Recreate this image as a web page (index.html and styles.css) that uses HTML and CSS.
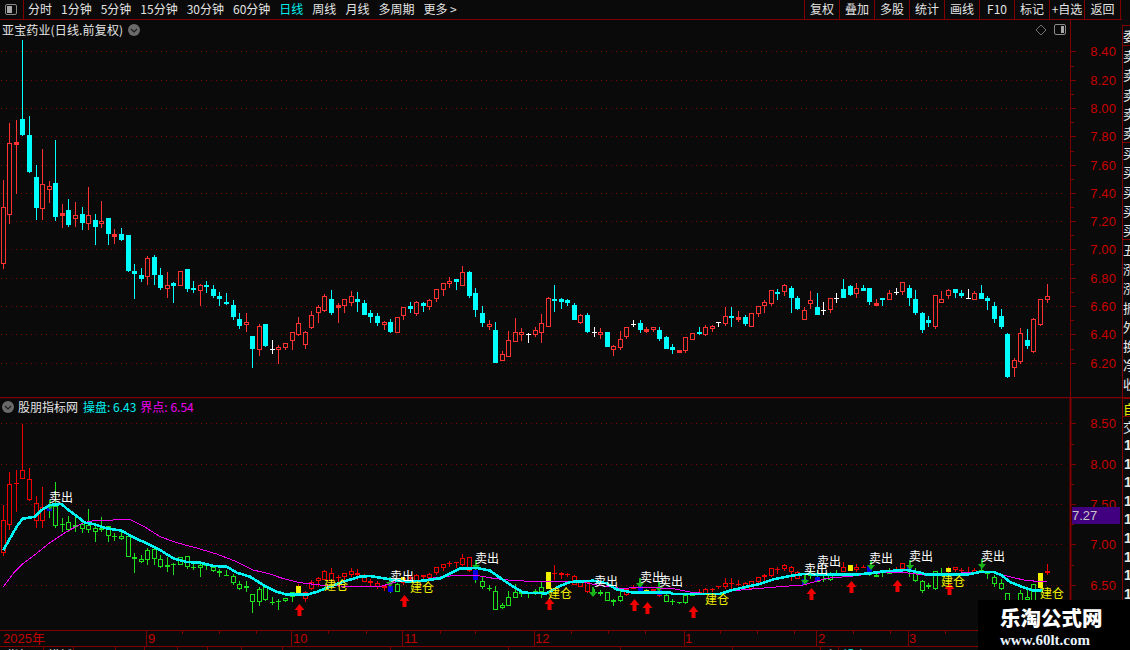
FILE: index.html
```html
<!DOCTYPE html>
<html lang="zh-CN">
<head>
<meta charset="utf-8">
<title>亚宝药业</title>
<link rel="stylesheet" href="styles.css">
</head>
<body>
<div class="app">
  <header class="toolbar">
    <div class="layout-btn">
      <svg width="12" height="12" viewBox="0 0 12 12"><rect x="0.5" y="0.5" width="11" height="10" rx="1.5" fill="none" stroke="#8a8a8a"/><rect x="2" y="2" width="5" height="7" fill="#a8a8a8"/></svg>
    </div>
    <nav class="tabs">
      <span>分时</span><span>1分钟</span><span>5分钟</span><span>15分钟</span><span>30分钟</span><span>60分钟</span>
      <span class="active">日线</span><span>周线</span><span>月线</span><span>多周期</span><span>更多 &gt;</span>
    </nav>
    <nav class="actions">
      <span>复权</span><span>叠加</span><span>多股</span><span>统计</span><span>画线</span><span>F10</span><span>标记</span><span>+自选</span><span>返回</span>
    </nav>
  </header>
  <main class="main">
    <div class="charts">
      <section class="pane pane-upper">
        <div class="pane-title">
          <span class="stock-name">亚宝药业(日线.前复权)</span>
          <svg class="chev" width="12" height="12" viewBox="0 0 12 12"><circle cx="6" cy="6" r="6" fill="#6a6a6a"/><path d="M3 5l3 3 3-3" fill="none" stroke="#1c1c1c" stroke-width="1.2"/></svg>
        </div>
        <div class="pane-tools">
          <svg width="12" height="12" viewBox="0 0 12 12"><path d="M6 1l5 5-5 5-5-5z" fill="none" stroke="#707070"/></svg>
          <svg width="13" height="12" viewBox="0 0 13 12"><rect x="0.5" y="0.5" width="11" height="10" rx="1.5" fill="none" stroke="#8a8a8a"/><rect x="7" y="2" width="3" height="7" fill="#a8a8a8"/></svg>
        </div>
        <svg id="upper" class="plot" width="1122" height="377" viewBox="0 20 1122 377"></svg>
      </section>
      <section class="pane pane-lower">
        <div class="pane-title lower-title">
          <svg class="chev" width="12" height="12" viewBox="0 0 12 12"><circle cx="6" cy="6" r="6" fill="#6a6a6a"/><path d="M3 5l3 3 3-3" fill="none" stroke="#1c1c1c" stroke-width="1.2"/></svg>
          <span>股朋指标网</span>
          <span class="cyan">操盘: 6.43</span>
          <span class="magenta">界点: 6.54</span>
        </div>
        <svg id="lower" class="plot" width="1122" height="233" viewBox="0 397 1122 233"></svg>
      </section>
      <svg id="time" class="time" width="1122" height="20" viewBox="0 630 1122 20"></svg>
    </div>
    <aside class="side">
      <div class="side-head"></div>
      <div class="side-group one"><span>委</span></div>
      <div class="side-group five"><span>卖</span><span>卖</span><span>卖</span><span>卖</span><span>卖</span></div>
      <div class="side-group five"><span>买</span><span>买</span><span>买</span><span>买</span><span>买</span></div>
      <div class="side-group eight"><span>五</span><span>涨</span><span>涨</span><span>振</span><span>外</span><span>换</span><span>净</span><span>收</span></div>
      <div class="side-group self"><span>自</span></div>
      <div class="side-group trade"><span>交</span></div>
      <div class="side-group nums"><span>1</span><span>1</span><span>1</span><span>1</span><span>1</span><span>1</span><span>1</span><span>1</span><span>1</span></div>
    </aside>
  </main>
  <div class="watermark">
    <strong>乐淘公式网</strong>
    <em>www.60lt.com</em>
  </div>
</div>
<script src="script.js"></script>
</body>
</html>
```
FILE: styles.css
```css
* { box-sizing: border-box; }
html, body { margin: 0; padding: 0; background: #0a0a0a; }
body { width: 1130px; height: 650px; overflow: hidden; font-family: "Noto Sans CJK SC", "Liberation Sans", sans-serif; color: #e4e4e4; font-size: 12px; }
.app { position: relative; width: 1130px; height: 650px; display: flex; flex-direction: column; }

.toolbar { display: flex; height: 20px; flex: none; width: 1122px; border-bottom: 1px solid #800000; line-height: 18px; }
.layout-btn { width: 24px; flex: none; border-right: 1px solid #800000; padding: 4px 0 0 5px; }
.layout-btn svg { display: block; }
.tabs { display: flex; gap: 9px; padding-left: 4px; flex: 1; white-space: nowrap; }
.tabs .active { color: #00f0f0; }
.actions { display: flex; margin-right: 1px; }
.actions span { width: 35px; text-align: center; border-left: 1px solid #800000; white-space: nowrap; }
.actions span:last-child { width: 37px; border-right: 1px solid #800000; }

.main { display: flex; height: 630px; }
.charts { width: 1122px; flex: none; display: flex; flex-direction: column; }
.pane { position: relative; flex: none; }
.pane-upper { height: 377px; }
.pane-lower { height: 233px; }
.plot { display: block; }
.time { display: block; }
.pane-title { position: absolute; left: 2px; top: 1px; display: flex; align-items: center; gap: 5px; height: 18px; line-height: 18px; white-space: nowrap; z-index: 1; }
.stock-name { letter-spacing: 0.15px; }
.lower-title { gap: 4px; }
.lower-title .cyan { margin-left: 1px; }
.cyan { color: #00f0f0; }
.magenta { color: #f000f0; }
.chev { flex: none; }
.pane-tools { position: absolute; right: 55px; top: 4px; display: flex; gap: 7px; }

.side { width: 8px; flex: none; margin-top: 5px; overflow: hidden; display: flex; flex-direction: column; border-left: 1px solid #800000; font-size: 13px; line-height: 19px; color: #e8e8e8; }
.side-group { display: flex; flex-direction: column; border-top: 1px solid #800000; flex: none; width: 20px; }
.side-group span { display: block; height: 19.2px; overflow: hidden; white-space: nowrap; }
.side-group.eight { height: 158px; }
.side-group.self { color: #e6e600; border-top-width: 2px; height: 19px; }
.side-group.trade { height: 20px; }
.side-group.nums { border-top: 0; font-family: "Liberation Sans", sans-serif; font-weight: 700; padding-left: 1px; font-size: 14px; }
.side-group.nums span { height: 18.6px; }

.watermark { position: absolute; left: 978px; top: 600px; width: 152px; height: 50px; background: #000; color: #fff; font-family: "Liberation Serif", "Noto Sans CJK SC", serif; display: flex; flex-direction: column; padding: 7px 0 0 22px; }
.watermark strong { font-size: 20.5px; line-height: 24px; font-weight: 900; white-space: nowrap; }
.watermark em { font-style: normal; font-weight: 700; font-size: 15px; line-height: 16px; margin-top: 1px; white-space: nowrap; color: #eaf4ff; }

.svg-axis { font-family: "Liberation Sans", sans-serif; font-size: 13px; fill: #c80000; letter-spacing: 0.1px; }
.svg-tag { font-family: "Liberation Sans", sans-serif; font-size: 13px; fill: #c8c8c8; }
.svg-sell { font-family: "Noto Sans CJK SC", sans-serif; font-size: 12px; fill: #fff; }
.svg-buy { font-family: "Noto Sans CJK SC", sans-serif; font-size: 12px; fill: #f0f000; }
.svg-time { font-family: "Liberation Sans", "Noto Sans CJK SC", sans-serif; font-size: 13px; fill: #c00000; }
.svg-strip { font-family: "Noto Sans CJK SC", sans-serif; font-size: 12px; fill: #e4e4e4; }
.svg-strip-c { font-family: "Noto Sans CJK SC", sans-serif; font-size: 12px; fill: #00f0f0; }
```
FILE: script.js
```js
var NS = "http://www.w3.org/2000/svg";
function el(parent, name, attrs, text) {
  var n = document.createElementNS(NS, name);
  for (var k in attrs) n.setAttribute(k, attrs[k]);
  if (text !== undefined) n.textContent = text;
  parent.appendChild(n);
  return n;
}
// Candle rows: x, high, top, bottom, low, kind (read on three source windows)
var seg1 = "10 450 532 703 716 r|28 279 340 556 581 r|49 270 337 341 491 r|67 30 267 315 318 c|88 258 315 426 429 c|109 405 441 533 570 c|127 357 463 536 570 r|148 453 469 479 519 r|166 330 459 561 573 c|187 522 550 554 594 r|205 507 540 585 591 c|226 516 556 566 591 r|247 531 552 579 600 c|265 471 556 581 600 r|286 552 570 591 645 c|304 513 573 581 594 r|325 564 564 612 645 c|343 597 613 617 642 r|364 594 612 630 633 c|385 615 615 723 726 c|403 702 724 732 807 c|424 714 735 747 756 c|442 678 685 740 765 r|463 675 681 735 765 c|481 714 735 774 780 c|502 726 766 776 804 r|520 756 760 764 819 c|541 724 724 767 767 r|562 717 717 777 786 c|580 753 774 776 789 c|601 762 766 782 828 r|619 753 765 767 789 c|640 765 777 798 804 c|658 786 798 807 828 c|679 789 817 819 825 c|700 810 825 861 870 c|718 849 867 888 897 c|739 849 877 885 906 r|757 918 918 957 1014 c|778 882 888 959 978 r|796 882 882 948 951 c|817 930 957 959 972 w|835 945 952 959 1002 r";
var seg2 = "16 280 280 293 300 r|37 246 247 272 300 r|55 202 220 254 258 r|76 243 246 284 297 r|94 183 196 233 236 r|115 166 172 188 219 r|133 132 139 183 186 r|154 120 148 189 195 c|175 160 166 172 219 r|193 148 148 167 189 r|214 123 139 158 167 r|232 126 148 155 186 c|253 150 160 195 195 c|271 180 190 201 219 c|292 190 198 219 228 c|313 212 217 224 240 r|331 208 216 246 249 c|352 201 202 248 248 r|370 171 172 197 210 r|391 156 168 177 189 c|409 153 157 191 198 r|430 156 159 167 186 c|448 148 151 171 180 r|469 117 118 146 156 r|490 99 100 119 138 r|508 82 94 102 114 r|529 87 87 96 120 c|547 48 67 107 108 r|568 63 66 138 144 c|586 114 129 180 201 c|607 168 189 219 231 c|628 210 223 231 240 r|646 216 240 339 339 c|667 304 313 332 333 r|685 243 271 320 321 r|706 204 246 275 276 r|724 234 247 255 273 r|745 249 251 253 279 w|766 232 241 255 261 r|784 192 220 248 279 r|805 141 145 230 231 r|823 105 148 150 186 c|844 144 148 156 177 c|862 148 151 160 168 c|883 159 165 210 210 c|901 192 196 219 222 r|922 189 195 246 249 c|943 231 245 247 261 w|961 234 247 255 267 r|982 246 246 291 291 c|1000 285 289 299 318 r|1021 243 268 293 300 r|1039 231 232 260 267 r|1059 210 223 225 232 w|1081 210 219 240 249 c|1099 231 236 243 249 r|1120 232 232 240 246 r|1138 231 240 267 273 c|1159 258 261 297 297 c|1177 282 291 300 312 c|1198 300 300 305 309 r";
var seg3 = "16 231 232 272 279 r|37 220 220 239 239 r|58 201 216 218 225 c|76 196 202 225 228 r|97 196 199 208 216 r|115 186 187 189 201 w|136 141 169 191 198 r|154 141 168 171 201 c|175 153 172 178 186 r|196 165 171 192 198 c|214 160 160 200 200 r|235 138 139 162 171 r|253 120 127 139 159 r|274 91 91 132 138 r|292 87 96 98 120 c|313 72 75 97 108 r|334 78 84 114 159 c|352 108 114 147 150 c|373 141 151 179 179 r|391 93 121 131 147 r|412 99 141 165 165 c|430 126 150 153 165 w|451 114 115 151 159 r|469 99 115 118 129 w|490 57 87 114 114 c|511 75 78 105 108 c|529 69 85 102 114 r|550 75 84 90 90 c|568 84 84 126 135 c|589 117 130 136 138 r|607 114 114 116 138 c|628 90 99 120 120 r|649 84 96 98 105 w|667 66 67 97 105 r|688 75 84 114 138 c|706 90 117 159 165 c|727 156 159 210 219 c|745 168 180 189 201 c|766 105 106 200 207 r|784 93 118 128 129 r|805 87 90 109 117 r|826 87 87 99 114 c|844 90 99 105 114 c|865 87 114 116 117 w|883 93 99 120 120 r|904 75 99 117 117 c|922 108 114 120 150 c|943 126 138 177 189 c|964 147 168 201 207 c|982 219 222 351 354 c|1003 294 300 323 351 r|1021 204 220 305 312 r|1042 207 240 258 267 c|1060 174 177 276 279 r|1081 117 118 195 198 r|1102 72 109 119 129 r";

function parse(seg, ox, oy) {
  return seg.split("|").map(function (s) {
    var p = s.split(" ");
    return { x: Math.floor(ox + p[0] / 3) + 0.5, hi: oy + p[1] / 3, top: oy + p[2] / 3, bot: oy + p[3] / 3, lo: oy + p[4] / 3, k: p[5] };
  });
}
var candles = parse(seg1, 0, 30).concat(parse(seg2, 280, 250), parse(seg3, 680, 260));

function line(g, x1, y1, x2, y2, c, extra) {
  var a = { x1: x1, y1: y1, x2: x2, y2: y2, stroke: c };
  for (var k in extra) a[k] = extra[k];
  el(g, "line", a);
}
function drawCandle(g, d, map, c, filled, isWhite) {
  var hi = Math.round(map(d.hi)), top = Math.round(map(d.top)), bot = Math.round(map(d.bot)), lo = Math.round(map(d.lo));
  var h = bot - top;
  if (h < 2) { bot = top + 1; h = 1; }
  if (isWhite) {
    line(g, d.x, hi, d.x, lo, c);
    line(g, d.x - 2.5, top + 0.5, d.x + 2.5, top + 0.5, c);
    return;
  }
  if (top > hi) line(g, d.x, hi, d.x, top, c);
  if (lo > bot) line(g, d.x, bot, d.x, lo, c);
  if (h <= 2) {
    el(g, "rect", { x: d.x - 2.5, y: top, width: 5, height: Math.max(h, 1) + (filled === null ? 0 : 1), fill: c });
  } else if (filled) {
    el(g, "rect", { x: d.x - 2.5, y: top, width: 5, height: h, fill: c });
  } else {
    el(g, "rect", { x: d.x - 2, y: top + 0.5, width: 4, height: h - 1, fill: "none", stroke: c });
  }
}
function grid(g, ys) {
  ys.forEach(function (y) {
    line(g, 1, y + 0.5, 1066, y + 0.5, "#7a0000", { "stroke-dasharray": "1 4" });
  });
}
function axis(g, ys, labels, top, bottom, w) {
  line(g, 1070.5, top, 1070.5, bottom, "#800000", { "stroke-width": w });
  ys.forEach(function (y, i) {
    line(g, 1071, y + 0.5, 1076, y + 0.5, "#800000");
    if (i < ys.length - 1) {
      var m = Math.round((y + ys[i + 1]) / 2) + 0.5;
      line(g, 1071, m, 1074, m, "#800000");
    }
    el(g, "text", { x: 1116, y: y + 5, "text-anchor": "end", "class": "svg-axis" }, labels[i]);
  });
}
function pts(list, ox, oy) {
  return list.map(function (p) { return (ox + p[0] / 3) + "," + (oy + p[1] / 3); }).join(" ");
}

// Upper pane
var up = document.getElementById("upper");
var upYs = [51, 80, 108, 136, 165, 193, 221, 249, 278, 306, 334, 363];
var upLabels = ["8.40", "8.20", "8.00", "7.80", "7.60", "7.40", "7.20", "7.00", "6.80", "6.60", "6.40", "6.20"];
grid(up, upYs);
axis(up, upYs, upLabels, 20, 397, 1);
var upColors = { r: "#ff3232", c: "#00ffff", w: "#ffffff" };
candles.forEach(function (d) {
  drawCandle(up, d, function (y) { return y; }, upColors[d.k], d.k === "c", d.k === "w");
});

// Lower pane: candles take their colour from the signal state, not the day's direction
var low = document.getElementById("lower");
line(low, 0, 397.5, 1122, 397.5, "#800000", { "stroke-width": 1.5 });
var lowYs = [423, 464, 504, 544, 585];
grid(low, lowYs);
axis(low, lowYs, ["8.50", "8.00", "7.50", "7.00", "6.50"], 397, 630, 2);
var holdRanges = [[0, 47], [296, 388], [401, 473], [546, 593], [625, 640], [648, 660], [693, 802], [841, 866], [893, 907], [946, 980], [1040, 1130]];
function holding(x) {
  return holdRanges.some(function (r) { return x >= r[0] && x < r[1]; });
}
candles.forEach(function (d) {
  drawCandle(low, d, function (y) { return 431.1 + (y - 52) * 0.5745; }, holding(d.x) ? "#f00000" : "#1ee01e", null, false);
});

// Signal bars: x, y, w, h, colour
[[296, 586, 5, 8, "#f0f000"], [546, 572, 5, 17, "#f0f000"], [401, 577, 4, 5, "#f0f000"], [848, 565, 5, 6, "#f0f000"], [946, 568, 5, 4, "#f0f000"], [1038, 573, 5, 15, "#f0f000"], [644, 590, 5, 1, "#f0f000"], [631, 587, 5, 1, "#f0f000"],
 [47, 507, 5, 4, "#0000e0"], [388, 586, 5, 6, "#0000e0"], [473, 570, 5, 10, "#0000e0"], [638, 586, 5, 6, "#0000e0"], [657, 590, 5, 5, "#0000e0"], [802, 579, 5, 6, "#0000e0"], [815, 577, 5, 4, "#0000e0"], [867, 566, 5, 6, "#0000e0"], [907, 566, 5, 4, "#0000e0"]
].forEach(function (b) { el(low, "rect", { x: b[0], y: b[1], width: b[2], height: b[3], fill: b[4] }); });

// Down arrows above the sell labels' bars
[[50, 500], [390, 577], [476, 560], [593, 587], [640, 578], [659, 582], [805, 575], [871, 560], [910, 560], [982, 559]].forEach(function (a) {
  var x = a[0], y = a[1];
  el(low, "polygon", { points: [x - 1, y, x + 1, y, x + 1, y + 5, x + 4, y + 5, x, y + 10, x - 4, y + 5, x - 1, y + 5].join(" "), fill: "#18b418" });
});

// Indicator lines
var magenta = pts([[10,590],[40,550],[70,520],[110,490],[150,458],[200,425],[250,398],[280,392],[330,392],[350,388],[390,388],[430,408],[480,440],[530,458],[590,474],[650,492],[710,515],[760,540],[810,552],[850,566],[900,578],[960,585],[1020,588],[1140,590]], 0, 390)
 + " " + pts([[60,152],[120,152],[170,142],[230,136],[290,136],[340,145],[400,152],[460,154],[600,155],[650,165],[720,175],[800,172],[880,176],[940,188],[1020,192],[1060,182]], 380, 530)
 + " " + pts([[0,295],[60,290],[130,285],[200,265],[280,258],[340,250],[420,246],[500,256],[620,248],[680,244],[740,258],[800,272],[860,275]], 760, 490);
var cyan = pts([[10,480],[30,445],[50,410],[68,386],[105,380],[125,360],[150,345],[185,342],[205,360],[230,378],[255,398],[280,402],[320,415],[365,422],[400,442],[440,460],[480,480],[520,505],[560,516],[600,518],[640,528],[680,530],[710,548],[750,560],[790,585],[830,605],[860,614],[920,614],[950,606],[990,590],[1030,575],[1080,560],[1110,558],[1140,563]], 0, 390)
 + " " + pts([[40,150],[90,155],[130,152],[180,145],[210,130],[240,116],[290,114],[330,122],[370,150],[400,170],[430,188],[500,190],[540,168],[570,156],[640,152],[680,160],[710,178],[760,188],[870,188],[880,192],[1020,192],[1050,182],[1100,170]], 380, 530)
 + " " + pts([[0,282],[40,268],[90,258],[130,252],[200,254],[280,254],[330,250],[370,244],[440,240],[480,248],[500,254],[620,254],[660,246],[700,246],[725,256],[750,276],[790,292],[820,302],[850,302]], 760, 490);
el(low, "polyline", { points: magenta, fill: "none", stroke: "#f000f0", "stroke-width": 1, "shape-rendering": "crispEdges" });
el(low, "polyline", { points: cyan, fill: "none", stroke: "#00f4f4", "stroke-width": 2.6, "shape-rendering": "crispEdges" });

// Buy arrows
[[299, 604], [404, 595], [549, 598], [634, 599], [647, 602], [693, 606], [811, 588], [851, 581], [897, 580], [949, 583]].forEach(function (a) {
  var x = a[0] + 0.5, y = a[1];
  el(low, "polygon", { points: [x, y, x + 5, y + 6, x + 2, y + 6, x + 2, y + 12, x - 2, y + 12, x - 2, y + 6, x - 5, y + 6].join(" "), fill: "#f00000" });
});

// Labels
[[49, 491], [390, 570], [475, 552], [594, 575], [640, 571], [659, 575], [804, 563], [817, 555], [869, 552], [909, 550], [981, 550]].forEach(function (l) {
  el(low, "text", { x: l[0], y: l[1] + 11, "class": "svg-sell" }, "卖出");
});
[[324, 579], [410, 581], [548, 587], [705, 593], [941, 575], [1040, 587]].forEach(function (l) {
  el(low, "text", { x: l[0], y: l[1] + 11, "class": "svg-buy" }, "建仓");
});

// Latest price tag
el(low, "rect", { x: 1072, y: 507, width: 48, height: 17, fill: "#400080" });
el(low, "text", { x: 1072, y: 520, "class": "svg-tag" }, "7.27");

// Time axis
var t = document.getElementById("time");
line(t, 0, 630.5, 1122, 630.5, "#800000");
line(t, 0, 646.5, 1122, 646.5, "#800000");
[[3, "2025年", 0], [148, "9", 146], [293, "10", 291], [404, "11", 402], [535, "12", 534], [685, "1", 684], [818, "2", 816], [909, "3", 908]].forEach(function (m) {
  el(t, "text", { x: m[0], y: 643, "class": "svg-time" }, m[1]);
  if (m[2]) line(t, m[2] + 0.5, 631, m[2] + 0.5, 646, "#800000");
});
[182, 219, 256, 328, 366, 440, 475, 571, 608, 645, 720, 757, 794, 853, 890, 945, 982].forEach(function (x) {
  line(t, x + 0.5, 631, x + 0.5, 634, "#800000");
});
[43, 73, 115, 144, 177, 207, 241, 282, 390, 508, 620, 732, 820, 838].forEach(function (x) {
  line(t, x + 0.5, 647, x + 0.5, 650, "#800000");
});
el(t, "text", { x: 7, y: 660, "class": "svg-strip" }, "指标");
el(t, "text", { x: 48, y: 660, "class": "svg-strip" }, "模板");
el(t, "text", { x: 825, y: 660, "class": "svg-strip" }, "上");
el(t, "text", { x: 843, y: 660, "class": "svg-strip-c" }, "操盘");
```
